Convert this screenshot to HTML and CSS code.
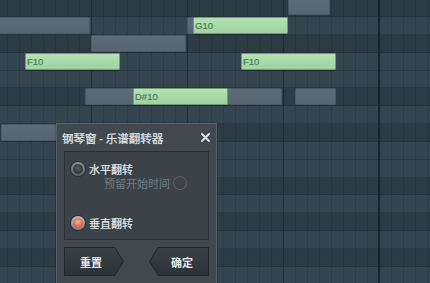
FILE: index.html
```html
<!DOCTYPE html>
<html lang="zh">
<head>
<meta charset="utf-8">
<link rel="stylesheet" href="styles.css">
</head>
<body>
<div class="roll">
  <div class="rows">
    <div class="row b"></div>
    <div class="row w"></div>
    <div class="row b"></div>
    <div class="row w"></div>
    <div class="row w"></div>
    <div class="row b"></div>
    <div class="row w"></div>
    <div class="row b"></div>
    <div class="row w"></div>
    <div class="row w"></div>
    <div class="row b"></div>
    <div class="row w"></div>
    <div class="row b"></div>
    <div class="row w"></div>
    <div class="row b"></div>
    <div class="row w"></div>
    <div class="row w"></div>
  </div>

  <div class="note ghost" style="left:288px;top:-2px;width:42px"></div>
  <div class="note ghost" style="left:-2px;top:17px;width:92px"></div>
  <div class="note ghost" style="left:187px;top:17px;width:12px"></div>
  <div class="note green" style="left:193px;top:17px;width:95px"><span>G10</span></div>
  <div class="note ghost" style="left:91px;top:35px;width:95px"></div>
  <div class="note green" style="left:25px;top:53px;width:95px"><span>F10</span></div>
  <div class="note green" style="left:241px;top:53px;width:95px"><span>F10</span></div>
  <div class="note ghost" style="left:85px;top:88px;width:197px"></div>
  <div class="note ghost" style="left:295px;top:88px;width:41px"></div>
  <div class="note green" style="left:133px;top:88px;width:95px"><span>D#10</span></div>
  <div class="note ghost" style="left:1px;top:124px;width:70px"></div>

  <div class="dialog">
    <div class="titlebar">
      <span class="title">钢琴窗 - 乐谱翻转器</span>
      <svg class="close" width="9" height="9" viewBox="0 0 9 9"><path d="M1 1 L8 8 M8 1 L1 8" stroke="#e2e6e9" stroke-width="1.8" stroke-linecap="round"/></svg>
    </div>
    <div class="panel">
      <div class="opt first">
        <span class="radio"></span>
        <span class="label">水平翻转</span>
      </div>
      <div class="opt sub">
        <span class="label dim">预留开始时间</span>
        <span class="radio off"></span>
      </div>
      <div class="opt second">
        <span class="radio on"></span>
        <span class="label">垂直翻转</span>
      </div>
    </div>
    <div class="buttons">
      <div class="btn right"><div class="btn-in">重置</div></div>
      <div class="btn left"><div class="btn-in">确定</div></div>
    </div>
  </div>
</div>
</body>
</html>
```

FILE: styles.css
```css
html, body {
  margin: 0;
  padding: 0;
  background: #2c3a44;
}
.roll {
  position: relative;
  width: 430px;
  height: 283px;
  overflow: hidden;
  font-family: "Noto Sans CJK SC", "Noto Sans", sans-serif;
}
.rows {
  display: flex;
  flex-direction: column;
  margin-top: -0.85px;
}
.row {
  height: 17.85px;
  flex: none;
  box-shadow: inset 0 -1px 0 rgba(20, 30, 38, 0.3);
  background-image:
    linear-gradient(to right, transparent 378px, #17232b 378px, #17232b 380px, transparent 380px),
    repeating-linear-gradient(to right, transparent 0, transparent 91px, rgba(18, 28, 36, 0.45) 91px, rgba(18, 28, 36, 0.45) 92px, transparent 92px, transparent 96px),
    repeating-linear-gradient(to right, transparent 0, transparent 7px, rgba(22, 32, 40, 0.25) 7px, rgba(22, 32, 40, 0.25) 8px, transparent 8px, transparent 12px);
}
.row.w { background-color: #35454f; }
.row.b { background-color: #2d3b45; }

.note {
  position: absolute;
  height: 17px;
  box-sizing: border-box;
  border-radius: 1px;
}
.note.ghost {
  background: linear-gradient(#5c6b75, #56656f);
  border: 1px solid #4a5861;
}
.note.green {
  background: linear-gradient(#b4e2b3, #9fd2a1);
  border: 1px solid #6f9c72;
  box-shadow: 0 1px 0 rgba(20, 30, 36, 0.5);
}
.note span {
  display: block;
  font-family: "Liberation Sans", Arial, sans-serif;
  font-size: 9.5px;
  line-height: 15px;
  padding-left: 1px;
  color: #4d7a53;
  -webkit-text-stroke: 0.2px #4d7a53;
}

.dialog {
  position: absolute;
  left: 56px;
  top: 123px;
  width: 161px;
  height: 175px;
  box-sizing: border-box;
  padding: 0 7px;
  background: #41494f;
  border: 1px solid #566067;
  box-shadow: 0 0 2px rgba(0, 0, 0, 0.4);
}
.titlebar {
  height: 27px;
  display: flex;
  align-items: center;
  justify-content: space-between;
  margin-left: -2px;
  margin-right: -1px;
}
.title {
  font-size: 11.5px;
  color: #dde1e4;
  line-height: 14px;
  -webkit-text-stroke: 0.25px #dde1e4;
}
.close { display: block; }

.panel {
  height: 89px;
  box-sizing: border-box;
  border: 1px solid #2a3136;
  background: #3b4349;
  padding-top: 9.5px;
  display: flex;
  flex-direction: column;
}
.opt {
  display: flex;
  align-items: center;
  height: 14px;
}
.opt.first { padding-left: 6px; }
.opt.sub { padding-left: 39px; }
.opt.second { padding-left: 6px; margin-top: 26.5px; }
.label {
  font-size: 11px;
  line-height: 14px;
  color: #e6e9eb;
  margin-left: 4px;
  -webkit-text-stroke: 0.2px #e6e9eb;
}
.label.dim {
  color: #727b82;
  -webkit-text-stroke: 0;
  margin-left: 0;
  margin-right: 3px;
}
.radio {
  width: 14px;
  height: 14px;
  box-sizing: border-box;
  border-radius: 50%;
  padding: 2px;
  background: linear-gradient(#8d959b, #596167);
  box-shadow: 0 0 0 1px #2a3034;
  flex: none;
  display: flex;
}
.radio::after {
  content: "";
  flex: 1;
  border-radius: 50%;
  background: radial-gradient(circle at 50% 40%, #575e63 0, #3a4044 55%, #2a2f33 100%);
}
.radio.off {
  padding: 1px;
  background: #596268;
  box-shadow: none;
}
.radio.off::after {
  background: #3b4349;
}
.radio.on {
  background: linear-gradient(#b9bfc3, #7a8288);
}
.radio.on::after {
  background: radial-gradient(circle at 50% 40%, #f8b89c 0, #ec7453 45%, #c9452c 100%);
}

.buttons {
  display: flex;
  justify-content: space-between;
  margin-top: 7px;
}
.btn {
  width: 60px;
  height: 29px;
  background: #20262a;
}
.btn.right {
  clip-path: polygon(0 0, 51px 0, 60px 14.5px, 51px 29px, 0 29px);
}
.btn.left {
  clip-path: polygon(9px 0, 60px 0, 60px 29px, 9px 29px, 0 14.5px);
}
.btn-in {
  height: 100%;
  box-sizing: border-box;
  display: flex;
  align-items: center;
  justify-content: center;
  font-size: 11px;
  font-weight: bold;
  color: #e6e9eb;
  background: linear-gradient(#3a4248, #2b3237);
}
.btn.right .btn-in {
  clip-path: polygon(1px 1px, 50.5px 1px, 58.8px 14.5px, 50.5px 28px, 1px 28px);
  padding-right: 6px;
}
.btn.left .btn-in {
  clip-path: polygon(9.5px 1px, 59px 1px, 59px 28px, 9.5px 28px, 1.2px 14.5px);
  padding-left: 6px;
}
```
